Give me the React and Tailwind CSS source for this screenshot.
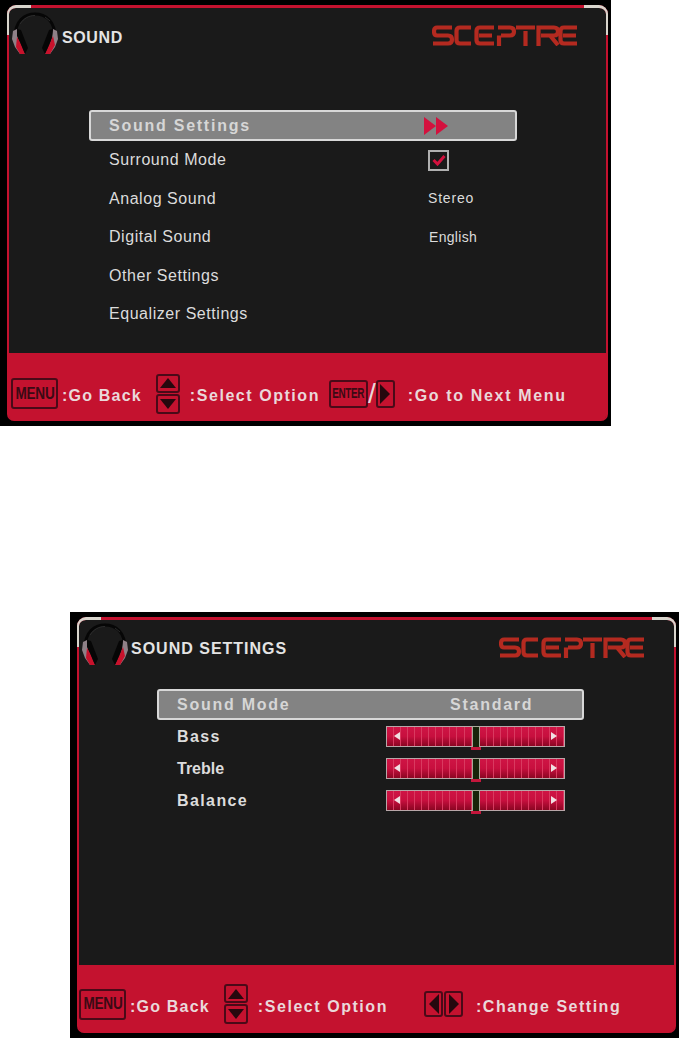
const sans = "font-['Liberation_Sans',Arial,sans-serif]";

function Headphones() {
  return (
    <svg width="48" height="44" viewBox="0 0 48 44" className="shrink-0">
      <path d="M4 26C4 8 14 2 24 2s20 6 20 24" fill="none" stroke="#060606" strokeWidth="3" />
      <path d="M9 12C13 6 18 3.500 24 3.500M34 5l5 4" fill="none" stroke="#333" strokeWidth="0.8" />
      <polygon points="2,19 6,17 7,26 10,36 14,42 9,42 4,35 1,27" fill="#8f8188" />
      <polygon points="6,25 9,30 14,42 9,42 5,35" fill="#c8122c" />
      <polygon points="6,17 10,18 17,36 14,42 9,30 6,24" fill="#060606" />
      <polygon points="46,19 42,17 41,26 38,36 34,42 39,42 44,35 47,27" fill="#8f8188" />
      <polygon points="42,24 39,31 34,42 39,42 44,33" fill="#c8122c" />
      <polygon points="42,17 38,18 31,36 34,42 38,33 41,25" fill="#060606" />
    </svg>
  );
}

// wordmark, drawn because the letter shapes are the brand's own
function Logo() {
  return (
    <svg width="145" height="21" viewBox="0 0 145 21" role="img" aria-label="SCEPTRE" fill="none" stroke="#b42a20" strokeWidth="4.2">
      <path d="M20 2.500H5Q2 2.500 2 6.500T5 10.500H16Q20 10.500 20 14.500T16 18.500H1" />
      <path d="M39 2.500H28Q24.500 2.500 24.500 6V15Q24.500 18.500 28 18.500H39" />
      <path d="M62 2.500H48Q44.500 2.500 44.500 6V15Q44.500 18.500 48 18.500H62M47 10.500H60" />
      <path d="M67 21V10.500M66 2.500H78Q82 2.500 82 6.500T78 10.500H69" />
      <path d="M84 2.500H103M93.500 6V21" />
      <path d="M106.500 21V2.500H122Q126 2.500 126 6.500T122 10.500H109M118 10.500L126 20" />
      <path d="M145 2.500H132Q128.500 2.500 128.500 6V15Q128.500 18.500 132 18.500H145M131 10.500H144" />
    </svg>
  );
}

function KeyBox({ className, children }) {
  return (
    <div className={`flex items-center justify-center overflow-hidden rounded-[3px] border-2 border-[#4a0a18] text-[#3a0a14] ${className}`}>
      {children}
    </div>
  );
}

function Tri({ dir }) {
  const points = {
    up: "0,10 8,0 16,10",
    down: "0,0 16,0 8,10",
    left: "10,0 10,20 0,10",
    right: "0,0 0,20 10,10",
  };
  const size = dir === "up" || dir === "down" ? [16, 10] : [10, 20];
  return (
    <svg width={size[0]} height={size[1]} viewBox={`0 0 ${size[0]} ${size[1]}`}>
      <polygon points={points[dir]} fill="#26080e" />
    </svg>
  );
}

function MenuKey() {
  return (
    <KeyBox className="w-[47px] h-[31px] shrink-0">
      <span className="text-[16px] font-bold tracking-[-0.3px] scale-x-[0.85]">MENU</span>
    </KeyBox>
  );
}

function UpDown() {
  return (
    <div className="flex flex-col gap-[1px] shrink-0">
      <KeyBox className="w-[24px] h-[19px]"><Tri dir="up" /></KeyBox>
      <KeyBox className="w-[24px] h-[20px]"><Tri dir="down" /></KeyBox>
    </div>
  );
}

function Hint({ className, children }) {
  return (
    <span className={`mt-[5px] text-[16px] font-bold text-[#ead8da] whitespace-nowrap ${className}`}>
      {children}
    </span>
  );
}

function Screen({ className, panelClass, children }) {
  return (
    <div className={`bg-black h-[426px] ${className}`}>
      <div className={`relative flex flex-col rounded-t-[9px] rounded-b-[7px] border-x-2 border-t-[3px] border-[#c4122f] bg-[#1a1a1a] ${panelClass}`}>
        {children}
      </div>
    </div>
  );
}

function Corners() {
  return (
    <>
      <div className="absolute -left-[2px] -top-[3px] h-[30px] w-[24px] rounded-tl-[9px] border-l-2 border-t-[3px] border-[#d8d4cc]" />
      <div className="absolute -right-[2px] -top-[3px] h-[30px] w-[24px] rounded-tr-[9px] border-r-2 border-t-[3px] border-[#d8d4cc]" />
    </>
  );
}

function Row({ className, labelClass, label, children }) {
  return (
    <div className={`grid items-center pl-[20px] text-[16px] text-[#dcdcdc] ${className}`}>
      <span className={labelClass}>{label}</span>
      {children}
    </div>
  );
}

function SelectedBar({ className, label, children }) {
  return (
    <div className={`grid h-[31px] items-center rounded-[3px] border-2 border-[#d8d8d8] bg-[#838383] pl-[18px] text-[16px] font-bold tracking-[1.75px] text-[#d6d6d6] ${className}`}>
      <span>{label}</span>
      {children}
    </div>
  );
}

const ticks = Array.from({ length: 12 });

function Ticks() {
  return (
    <div className="flex flex-1">
      {ticks.map((_, i) => (
        <div key={i} className="flex-1 border-r border-[#d93a60] bg-gradient-to-b from-[#cf1445] via-[#c70f3e] to-[#8a0622]" />
      ))}
    </div>
  );
}

function Slider() {
  return (
    <div className="relative flex h-[21px] w-[179px] border border-[#b8a6a8] bg-[#c70f3e]">
      <Ticks />
      <div className="relative z-10 -my-px w-[8px] shrink-0 border-x border-t border-[#a9a99a] bg-[#18240a]">
        <div className="absolute -bottom-[3px] -left-[2px] h-[3px] w-[10px] bg-[#c4163c]" />
      </div>
      <Ticks />
      <svg width="6" height="8" viewBox="0 0 6 8" className="absolute left-[7px] top-[5px]"><polygon points="6,0 6,8 0,4" fill="#f0dfe2" /></svg>
      <svg width="6" height="8" viewBox="0 0 6 8" className="absolute right-[7px] top-[5px]"><polygon points="0,0 0,8 6,4" fill="#f0dfe2" /></svg>
    </div>
  );
}

export default function App() {
  return (
    <div className={`min-h-screen bg-white ${sans}`}>
      {/* main sound menu */}
      <Screen className="w-[611px] pl-[7px] pr-[3px] pt-[5px]" panelClass="h-[416px]">
        <Corners />
        <div className="flex h-[102px] shrink-0 items-start">
          <div className="ml-[2px] mt-[4px]"><Headphones /></div>
          <span className="ml-[3px] mt-[18px] text-[16px] font-bold tracking-[0.6px] text-[#e4e4e4]">SOUND</span>
          <div className="ml-auto mr-[29px] mt-[17px]"><Logo /></div>
        </div>
        <div className="ml-[80px] w-[428px] flex-1">
          <SelectedBar className="grid-cols-[319px_1fr]" label="Sound Settings">
            <svg width="26" height="18" viewBox="0 0 26 18" className="-translate-x-[4px]">
              <polygon points="0,0 12,9 0,18" fill="#d4113e" />
              <polygon points="12,0 24,9 12,18" fill="#d4113e" />
            </svg>
          </SelectedBar>
          <Row className="h-[38.500px] grid-cols-[319px_1fr] tracking-[0.55px]" label="Surround Mode">
            <div className="flex h-[21px] w-[21px] items-center justify-center border-2 border-[#b0b0b0]">
              <svg width="14" height="12" viewBox="0 0 14 12"><path d="M1.500 6l4 4 7-8" fill="none" stroke="#d4113e" strokeWidth="3" /></svg>
            </div>
          </Row>
          <Row className="h-[38.500px] grid-cols-[319px_1fr] tracking-[0.55px]" label="Analog Sound"><span className="text-[14px] tracking-[0.8px]">Stereo</span></Row>
          <Row className="h-[38.500px] grid-cols-[319px_1fr] tracking-[0.55px]" label="Digital Sound"><span className="pl-[1px] text-[14px] tracking-[0.3px]">English</span></Row>
          <Row className="h-[38.500px] grid-cols-[319px_1fr] tracking-[0.55px]" label="Other Settings" />
          <Row className="h-[38.500px] grid-cols-[319px_1fr] tracking-[0.55px]" label="Equalizer Settings" />
        </div>
        <div className="flex h-[68px] shrink-0 items-center rounded-b-[5px] bg-[#c4122f] pl-[2px] pt-[13px]">
          <MenuKey />
          <Hint className="ml-[4px] tracking-[1.2px]">:Go Back</Hint>
          <div className="ml-[14px]"><UpDown /></div>
          <Hint className="ml-[10px] tracking-[1.55px]">:Select Option</Hint>
          <KeyBox className="ml-[9px] h-[28px] w-[39px] shrink-0">
            <span className="text-[15px] font-bold tracking-[-0.5px] scale-x-[0.66]">ENTER</span>
          </KeyBox>
          <span className="text-[28px] leading-none text-[#ead8da]">/</span>
          <KeyBox className="h-[28px] w-[19px] shrink-0"><Tri dir="right" /></KeyBox>
          <Hint className="ml-[13px] tracking-[1.65px]">:Go to Next Menu</Hint>
        </div>
      </Screen>

      {/* sound settings submenu */}
      <Screen className="ml-[70px] mt-[186px] w-[609px] pl-[7px] pr-[3px] pt-[5px]" panelClass="h-[416px]">
        <Corners />
        <div className="flex h-[69px] shrink-0 items-start">
          <div className="ml-[2px] mt-[3px]"><Headphones /></div>
          <span className="ml-[2px] mt-[17px] text-[16px] font-bold tracking-[1px] text-[#e4e4e4]">SOUND SETTINGS</span>
          <div className="ml-auto mr-[30px] mt-[17px]"><Logo /></div>
        </div>
        <div className="ml-[78px] w-[427px] flex-1">
          <SelectedBar className="grid-cols-[273px_1fr]" label="Sound Mode">
            <span>Standard</span>
          </SelectedBar>
          <Row className="h-[32px] grid-cols-[209px_1fr] font-bold tracking-[1.400px]" labelClass="mt-[2px]" label="Bass"><Slider /></Row>
          <Row className="h-[32px] grid-cols-[209px_1fr] font-bold tracking-[0px]" labelClass="mt-[2px]" label="Treble"><Slider /></Row>
          <Row className="h-[32px] grid-cols-[209px_1fr] font-bold tracking-[1.400px]" labelClass="mt-[2px]" label="Balance"><Slider /></Row>
        </div>
        <div className="flex h-[68px] shrink-0 items-center rounded-b-[5px] bg-[#c4122f] pt-[10px]">
          <MenuKey />
          <Hint className="ml-[4px] tracking-[1.2px]">:Go Back</Hint>
          <div className="ml-[14px]"><UpDown /></div>
          <Hint className="ml-[10px] tracking-[1.55px]">:Select Option</Hint>
          <KeyBox className="ml-[36px] h-[26px] w-[19px] shrink-0"><Tri dir="left" /></KeyBox>
          <KeyBox className="ml-[1px] h-[26px] w-[19px] shrink-0"><Tri dir="right" /></KeyBox>
          <Hint className="ml-[13px] tracking-[1.5px]">:Change Setting</Hint>
        </div>
      </Screen>
    </div>
  );
}
